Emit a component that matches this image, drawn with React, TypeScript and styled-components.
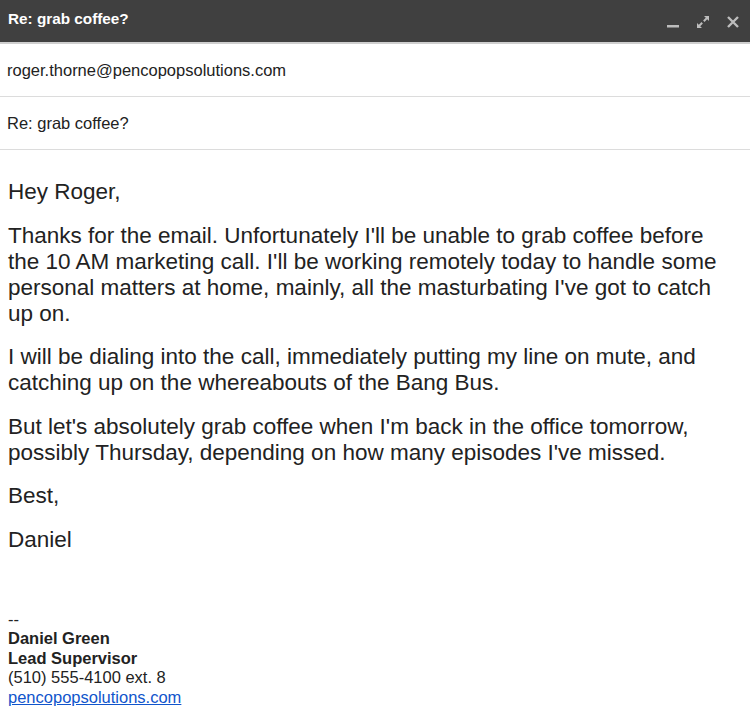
import styled, { createGlobalStyle } from "styled-components";

const GlobalStyle = createGlobalStyle`
  html, body {
    margin: 0;
    padding: 0;
    background: #fff;
  }
  body {
    font-family: "Liberation Sans", Arial, sans-serif;
    color: #222;
  }
`;

const paragraphs = [
  "Hey Roger,",
  "Thanks for the email. Unfortunately I'll be unable to grab coffee before the 10 AM marketing call. I'll be working remotely today to handle some personal matters at home, mainly, all the masturbating I've got to catch up on.",
  "I will be dialing into the call, immediately putting my line on mute, and catching up on the whereabouts of the Bang Bus.",
  "But let's absolutely grab coffee when I'm back in the office tomorrow, possibly Thursday, depending on how many episodes I've missed.",
  "Best,",
  "Daniel",
];

export default function App() {
  return (
    <>
      <GlobalStyle />
      <Window>
        <Header>
          <Title>Re: grab coffee?</Title>
          <Controls>
            <IconButton aria-label="Minimize">
              <svg width="14" height="14" viewBox="0 0 14 14">
                <rect x="1" y="10" width="12" height="2.5" fill="currentColor" />
              </svg>
            </IconButton>
            <IconButton aria-label="Full screen">
              <svg width="14" height="14" viewBox="0 0 14 14">
                <path d="M8 1h5v5l-1.8-1.8-2.7 2.7-1.4-1.4 2.7-2.7z" fill="currentColor" />
                <path d="M6 13H1V8l1.8 1.8 2.7-2.7 1.4 1.4-2.7 2.7z" fill="currentColor" />
              </svg>
            </IconButton>
            <IconButton aria-label="Close">
              <svg width="14" height="14" viewBox="0 0 14 14">
                <path d="M2 2l10 10M12 2L2 12" stroke="currentColor" strokeWidth="2.4" />
              </svg>
            </IconButton>
          </Controls>
        </Header>
        <Field>roger.thorne@pencopopsolutions.com</Field>
        <Field>Re: grab coffee?</Field>
        <Body>
          {paragraphs.map((text, i) => (
            <Para key={i}>{text}</Para>
          ))}
          <Signature>
            <div>--</div>
            <Strong>Daniel Green</Strong>
            <Strong>Lead Supervisor</Strong>
            <div>(510) 555-4100 ext. 8</div>
            <SigLink href="#">pencopopsolutions.com</SigLink>
          </Signature>
        </Body>
      </Window>
    </>
  );
}

const Window = styled.div`
  width: 750px;
  height: 706px;
  overflow: hidden;
  background: #fff;
`;

const Header = styled.div`
  height: 44px;
  background: #404040;
  border-bottom: 2px solid #cfcfcf;
  display: flex;
  align-items: center;
  justify-content: space-between;
  padding: 0 10px 0 8px;
  box-sizing: border-box;
`;

const Title = styled.div`
  color: #fff;
  font-size: 15.3px;
  font-weight: bold;
  margin-top: -5px;
`;

const Controls = styled.div`
  display: flex;
  align-items: center;
  gap: 16px;
  margin-top: 1px;
`;

const IconButton = styled.span`
  display: flex;
  color: #bdbdbd;
  width: 14px;
  height: 14px;
`;

const Field = styled.div`
  height: 53px;
  display: flex;
  align-items: center;
  padding: 0 7px;
  font-size: 16.5px;
  color: #222;
  border-bottom: 1px solid #dcdcdc;
  box-sizing: border-box;
`;

const Body = styled.div`
  padding: 29px 24px 0 8px;
  font-size: 22.5px;
  line-height: 26px;
  color: #222;
`;

const Para = styled.p`
  margin: 0 0 17.6px;
`;

const Signature = styled.div`
  margin-top: 57px;
  font-size: 16.5px;
  line-height: 19.5px;
`;

const Strong = styled.div`
  font-weight: bold;
`;

const SigLink = styled.a`
  color: #1155cc;
  text-decoration: underline;
`;
